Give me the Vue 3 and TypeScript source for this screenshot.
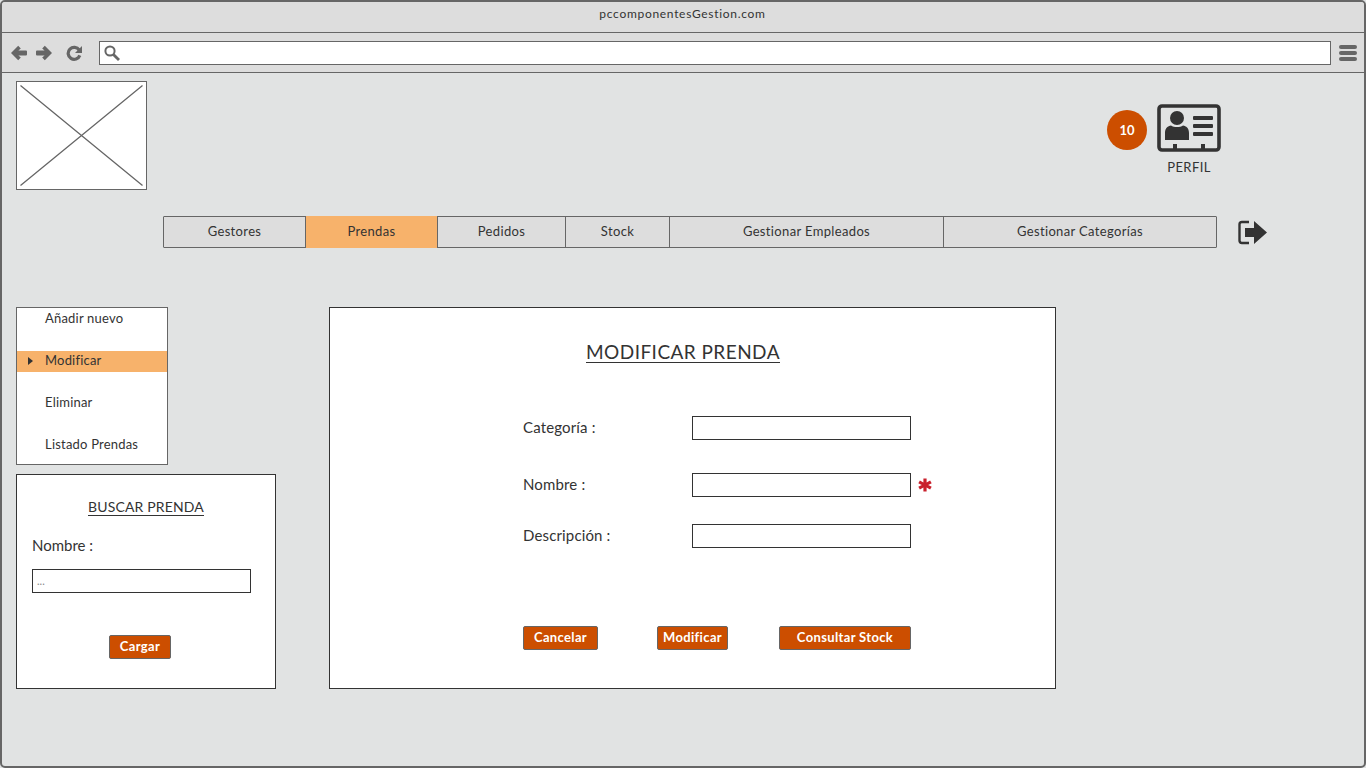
<template>
  <div class="window">
    <div class="titlebar">pccomponentesGestion.com</div>

    <div class="toolbar">
      <svg class="tool-icon" viewBox="0 0 16 16"><path d="M0 8 L7.200 0.800 L9.800 3.400 L7.400 5.500 H15 Q16 5.500 16 6.500 V9.500 Q16 10.500 15 10.500 H7.400 L9.800 12.600 L7.200 15.200 Z" /></svg>
      <svg class="tool-icon fwd" viewBox="0 0 16 16"><path d="M16 8 L8.800 0.800 L6.200 3.400 L8.600 5.500 H1 Q0 5.500 0 6.500 V9.500 Q0 10.500 1 10.500 H8.600 L6.200 12.600 L8.800 15.200 Z" /></svg>
      <svg class="tool-icon reload" viewBox="0 0 16 16">
        <path d="M13.200 5 A6 6 0 1 0 13.800 10.400" fill="none" stroke="#666" stroke-width="3.200" />
        <path d="M16 1 V8 H9 Z" />
      </svg>
      <div class="url">
        <svg class="search" viewBox="0 0 16 16">
          <circle cx="6" cy="6" r="4.600" fill="none" stroke="#666" stroke-width="2" />
          <path d="M9.400 9.400 L15 15" fill="none" stroke="#666" stroke-width="2.800" />
        </svg>
      </div>
      <div class="burger"><span></span><span></span><span></span></div>
    </div>

    <div class="content">
      <div class="top">
        <svg class="logo" viewBox="0 0 129 107">
          <path d="M3.500 3.500 L125.500 103.500 M125.500 3.500 L3.500 103.500" stroke="#666" stroke-width="1.300" fill="none" />
        </svg>
        <div class="user">
          <div class="badge">10</div>
          <div class="profile">
            <svg class="card" viewBox="0 0 64 48">
              <rect x="2" y="2" width="60" height="44" rx="3" fill="none" stroke="#333" stroke-width="3.600" />
              <circle cx="20" cy="14" r="7" fill="#333" />
              <path d="M8 36 V29 C8 24 11 22 14 21.500 C17 23.500 23 23.500 26 21.500 C29 22 32 24 32 29 V36 Z" fill="#333" />
              <rect x="36" y="12" width="20" height="4" rx="1" fill="#333" />
              <rect x="36" y="20" width="20" height="4" rx="1" fill="#333" />
              <rect x="36" y="28" width="20" height="4" rx="1" fill="#333" />
              <rect x="16" y="40" width="4" height="5" fill="#333" />
              <rect x="44" y="40" width="4" height="5" fill="#333" />
            </svg>
            <span>PERFIL</span>
          </div>
        </div>
      </div>

      <div class="nav-row">
        <div class="nav">
          <div v-for="t in tabs" :key="t" class="tab" :class="{ on: t === 'Prendas' }">{{ t }}</div>
        </div>
        <svg class="logout" viewBox="0 0 29 25">
          <path d="M11 2 H4 Q1.500 2 1.500 4.500 V20.500 Q1.500 23 4 23 H11" fill="none" stroke="#333" stroke-width="2.400" />
          <path d="M7 8 H16 V1 L29 12.500 L16 24 V17 H7 Z" fill="#333" />
        </svg>
      </div>

      <div class="main">
        <div class="side">
          <div class="menu">
            <div v-for="m in menu" :key="m" class="item" :class="{ on: m === 'Modificar' }">
              <i v-if="m === 'Modificar'" class="caret"></i>{{ m }}
            </div>
          </div>
          <div class="search-box">
            <div class="search-title"><span>BUSCAR PRENDA</span></div>
            <div class="search-label">Nombre :</div>
            <div class="input wide"><span>...</span></div>
            <div class="load"><button class="btn">Cargar</button></div>
          </div>
        </div>

        <div class="panel">
          <h2><span>MODIFICAR PRENDA</span></h2>
          <div class="field first">
            <label>Categoría :</label>
            <div class="input"></div>
          </div>
          <div class="field second">
            <label>Nombre :</label>
            <div class="input"></div>
            <svg class="req" viewBox="0 0 14 14">
              <path d="M5.400 0.500 H8.600 V4.400 L12.100 2.500 L13.700 5.200 L10.200 7 L13.700 8.800 L12.100 11.500 L8.600 9.600 V13.500 H5.400 V9.600 L1.900 11.500 L0.300 8.800 L3.800 7 L0.300 5.200 L1.900 2.500 L5.400 4.400 Z" />
            </svg>
          </div>
          <div class="field third">
            <label>Descripción :</label>
            <div class="input"></div>
          </div>
          <div class="actions">
            <button class="btn w-cancel">Cancelar</button>
            <button class="btn w-mod">Modificar</button>
            <button class="btn w-stock">Consultar Stock</button>
          </div>
        </div>
      </div>
    </div>
  </div>
</template>

<script setup lang="ts">
const tabs: string[] = ['Gestores', 'Prendas', 'Pedidos', 'Stock', 'Gestionar Empleados', 'Gestionar Categorías']
const menu: string[] = ['Añadir nuevo', 'Modificar', 'Eliminar', 'Listado Prendas']
</script>

<style>
html, body { margin: 0; background: #e1e3e3; }
</style>

<style scoped>
.window {
  box-sizing: border-box;
  width: 1366px;
  height: 768px;
  border: 2px solid #666;
  border-radius: 5px;
  background: #e1e3e3;
  overflow: hidden;
  font-family: Lato, "Noto Sans", sans-serif;
  font-size: 13px;
  color: #333;
}
.titlebar {
  height: 30px;
  border-bottom: 1px solid #666;
  background: #ddd;
  text-align: center;
  line-height: 24px;
  font-size: 12px;
  letter-spacing: 0.7px;
  padding-right: 1px;
}
.toolbar {
  height: 39px;
  border-bottom: 1px solid #666;
  background: #ddd;
  display: flex;
  align-items: center;
  padding-left: 9px;
}
.tool-icon { width: 16px; height: 16px; fill: #666; flex: none; }
.fwd { margin-left: 9px; }
.reload { margin-left: 14px; }
.url {
  width: 1226px;
  height: 22px;
  margin: 0 8px 0 17px;
  border: 1px solid #666;
  background: #fff;
  display: flex;
  align-items: center;
  padding-left: 4px;
}
.search { width: 16px; height: 16px; }
.burger { display: flex; flex-direction: column; gap: 2px; }
.burger span { display: block; width: 18px; height: 4px; border-radius: 2px; background: #666; }

.content { padding: 8px 0 0 14px; }
.top { display: flex; justify-content: space-between; padding-right: 143px; }
.logo {
  width: 131px;
  height: 109px;
  box-sizing: border-box;
  border: 1px solid #666;
  background: #fff;
}
.user { display: flex; align-items: flex-start; padding-top: 23px; }
.badge {
  width: 40px;
  height: 40px;
  margin: 6px 10px 0 0;
  border-radius: 50%;
  background: #cc4e00;
  color: #fff;
  font-size: 13px;
  font-weight: 700;
  display: flex;
  align-items: center;
  justify-content: center;
  padding-bottom: 1px;
  box-sizing: border-box;
}
.profile { display: flex; flex-direction: column; align-items: center; width: 64px; }
.profile span { margin-top: 7px; line-height: 16px; font-size: 13px; letter-spacing: 0.4px; }
.card { width: 64px; height: 48px; }

.nav-row { display: flex; align-items: center; margin: 26px 0 0 147px; }
.nav {
  display: grid;
  grid-template-columns: 141px 132px 128px 104px 274px 273px;
  width: 1054px;
  height: 32px;
  box-sizing: border-box;
  border: 1px solid #666;
  border-radius: 1px;
  background: #ddd;
}
.tab {
  display: flex;
  align-items: center;
  justify-content: center;
  border-left: 1px solid #666;
  margin-top: -1px;
  margin-bottom: -1px;
  padding-bottom: 2px;
  letter-spacing: 0.35px;
}
.tab:first-child { border-left: 0; }
.tab.on { background: #f7b26b; }
.logout { width: 29px; height: 25px; margin: 0 0 0 21px; }

.main { display: flex; align-items: flex-start; margin-top: 59px; }
.side { width: 260px; display: flex; flex-direction: column; gap: 9px; }
.menu {
  width: 152px;
  height: 158px;
  box-sizing: border-box;
  border: 1px solid #666;
  background: #fff;
  padding-top: 1px;
  display: flex;
  flex-direction: column;
  gap: 21px;
}
.item {
  position: relative;
  height: 21px;
  line-height: 18px;
  padding-left: 28px;
  letter-spacing: 0.2px;
}
.item.on { background: #f7b26b; }
.caret {
  position: absolute;
  left: 11px;
  top: 6px;
  border-left: 5px solid #333;
  border-top: 4px solid transparent;
  border-bottom: 4px solid transparent;
}
.search-box {
  width: 260px;
  height: 215px;
  box-sizing: border-box;
  border: 1px solid #333;
  background: #fff;
  padding: 24px 15px 0;
}
.search-title { text-align: center; font-size: 14px; line-height: 16px; letter-spacing: 0.15px; }
.search-title span { display: inline-block; border-bottom: 1px solid #333; }
.search-label { margin-top: 20px; font-size: 15px; line-height: 18px; }
.input {
  width: 219px;
  height: 24px;
  box-sizing: border-box;
  border: 1px solid #333;
  background: #fff;
  flex: none;
}
.wide { margin-top: 15px; padding: 2px 4px; font-size: 11px; line-height: 18px; color: #888; }
.load { margin-top: 42px; padding-left: 77px; }
.btn {
  display: block;
  height: 24px;
  padding: 0 0 3px;
  border: 1px solid #666;
  border-radius: 2px;
  background: #cc4e00;
  color: #fff;
  font: 700 13px Lato, "Noto Sans", sans-serif;
  letter-spacing: 0.35px;
}
.load .btn { width: 62px; }

.panel {
  width: 727px;
  height: 382px;
  box-sizing: border-box;
  border: 1px solid #333;
  background: #fff;
  margin-left: 53px;
  padding-left: 193px;
}
h2 { margin: 33px 0 0 63px; font-size: 19px; font-weight: 400; line-height: 21px; letter-spacing: 0.45px; }
h2 span { display: inline-block; border-bottom: 1px solid #333; white-space: nowrap; }
.field { display: flex; align-items: center; }
.field label { width: 169px; font-size: 15px; letter-spacing: 0.15px; padding-bottom: 3px; }
.first { margin-top: 53px; }
.second { margin-top: 33px; }
.third { margin-top: 27px; }
.req { width: 14px; height: 14px; margin-left: 7px; fill: #c9202c; }
.actions { display: flex; margin-top: 78px; }
.w-cancel { width: 75px; }
.w-mod { width: 71px; margin-left: 59px; }
.w-stock { width: 132px; margin-left: 51px; }
</style>
